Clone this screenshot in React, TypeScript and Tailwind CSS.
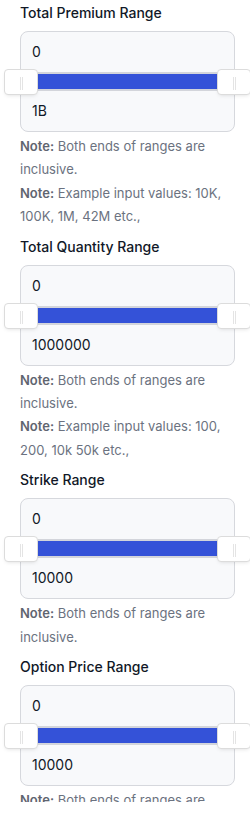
import React from "react"

interface RangeSection {
  title: string
  min: string
  max: string
  notes: string[]
}

const sections: RangeSection[] = [
  {
    title: "Total Premium Range",
    min: "0",
    max: "1B",
    notes: ["Both ends of ranges are inclusive.", "Example input values: 10K, 100K, 1M, 42M etc.,"],
  },
  {
    title: "Total Quantity Range",
    min: "0",
    max: "1000000",
    notes: ["Both ends of ranges are inclusive.", "Example input values: 100, 200, 10k 50k etc.,"],
  },
  {
    title: "Strike Range",
    min: "0",
    max: "10000",
    notes: ["Both ends of ranges are inclusive."],
  },
  {
    title: "Option Price Range",
    min: "0",
    max: "10000",
    notes: ["Both ends of ranges are inclusive."],
  },
]

function Handle({ side }: { side: "left" | "right" }) {
  return (
    <div
      className={`absolute top-[-3px] h-[26px] w-[34px] rounded-[4px] border border-[#dcdcdc] bg-white shadow-[0_2px_4px_-2px_rgba(0,0,0,0.15)] ${
        side === "left" ? "left-[-17px]" : "right-[-17px]"
      }`}
    >
      <span className="absolute left-[15px] top-[7px] h-[13px] w-px bg-[#e4e4e4]" />
      <span className="absolute left-[17px] top-[7px] h-[13px] w-px bg-[#e4e4e4]" />
    </div>
  )
}

function RangeBox({ min, max }: { min: string; max: string }) {
  return (
    <div className="rounded-lg border border-[#d6d8dd] bg-[#f8f9fb]">
      <div className="flex h-10 items-center px-[11px] text-sm text-[#111827]">{min}</div>
      <div className="relative h-[19px] bg-[#d3d5db]">
        <div className="absolute inset-x-0 top-[2px] bottom-[2px] bg-[#3452d8]" />
        <Handle side="left" />
        <Handle side="right" />
      </div>
      <div className="flex h-10 items-center px-[11px] text-sm text-[#111827]">{max}</div>
    </div>
  )
}

export default function App() {
  return (
    <div
      className="h-[802px] w-[250px] overflow-hidden bg-white"
      style={{ fontFamily: "Inter, 'Noto Sans', sans-serif" }}
    >
      <div className="flex flex-col gap-2 pl-5 pr-[15px] pt-[3px]">
        {sections.map((s) => (
          <div key={s.title} className="flex flex-col">
            <h3 className="mb-2 text-sm font-medium leading-5 text-[#111827]">{s.title}</h3>
            <RangeBox min={s.min} max={s.max} />
            <div className="mt-[3px] text-[13px] leading-[1.8] text-[#6b7280]">
              {s.notes.map((n) => (
                <p key={n}>
                  <span className="font-semibold text-[#5f6570]">Note:</span> {n}
                </p>
              ))}
            </div>
          </div>
        ))}
      </div>
    </div>
  )
}
